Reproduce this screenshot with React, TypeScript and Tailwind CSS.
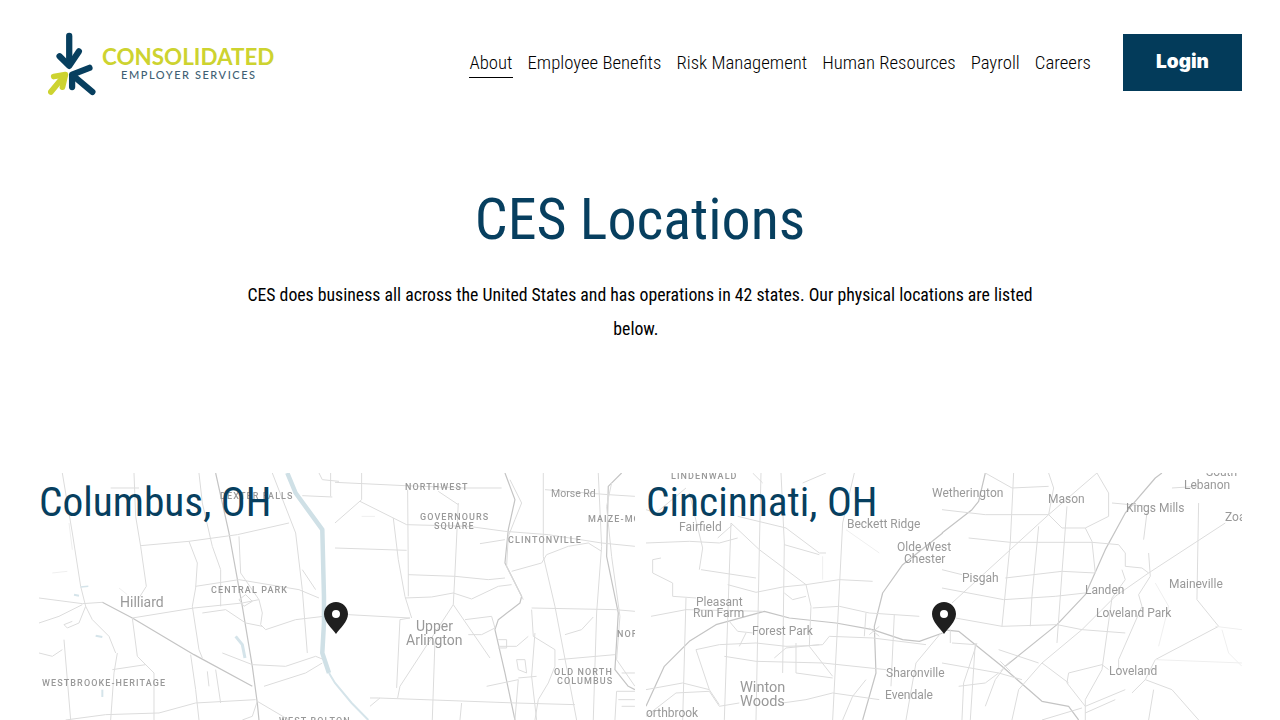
type Label = { x: number; y: number; text: string; size: number; spaced?: boolean };
type Line = { points: string; tone?: "major" | "faint" };

const navLinks = ["About", "Employee Benefits", "Risk Management", "Human Resources", "Payroll", "Careers"];

// road points are in 3x crop coords, each map is traced in a left and a right half
const columbusLeft = [
  "190,388 280,435 465,545 640,640|major",
  "530,0 570,180 610,400 640,580 655,690 660,741|major",
  "0,375 130,392 190,388",
  "70,0 100,180 125,340 140,400 120,450 85,465 75,455 100,445",
  "285,0 290,130 305,220 322,340 300,375",
  "305,218 450,205 595,185 750,150",
  "480,0 490,90 520,220 545,290 545,400",
  "450,205 475,270 470,345 460,400 480,530 490,555",
  "600,190 605,300 660,380 670,420 665,455 680,470 770,440 855,430",
  "470,340 600,320 780,350 840,375",
  "280,435 465,405 610,390 660,380",
  "280,435 295,550 345,600 345,741",
  "220,590 320,575",
  "235,540 225,600 215,741",
  "75,500 95,741",
  "0,450 60,430 130,395",
  "0,540 40,550 70,530",
  "140,400 160,440 210,490 230,540",
  "455,545 470,650 480,741",
  "505,595 510,640",
  "530,590 545,690",
  "80,741 200,725 360,720 470,690 650,680",
  "655,685 750,741",
  "655,685 640,730 610,741",
  "640,575 740,580 830,550 855,560",
  "675,640 800,600 850,570",
  "700,0 770,180 790,350 805,540",
  "790,290 830,350",
  "550,540 640,575",
  "215,45 300,45",
  "490,420 560,410 620,450 670,460",
  "840,0 850,20 900,25",
  "875,0 875,70",
  "790,68 880,72",
  "600,380 620,365 640,385 615,400 600,380",
  "90,150 100,230|faint",
  "40,300 85,295|faint",
  "240,345 265,365|faint",
];

const columbusRight = [
  "510,0 540,80 520,170 510,270 560,370 555,390 490,440 480,470 510,600 540,741|major",
  "525,20 560,90 540,140 520,190 515,280 565,380",
  "860,0 820,40 815,250 850,420 840,590 880,640 900,650|major",
  "830,30 815,100 830,250 855,430 845,560 900,640",
  "0,28 210,38 390,45 500,45",
  "80,0 80,80 0,150",
  "75,85 215,155 400,160 510,175 640,185 800,210 900,220",
  "0,225 215,232",
  "175,135 190,260 210,370 230,435",
  "218,50 220,300 220,370",
  "370,90 360,300 355,395",
  "310,55 370,95",
  "220,305 360,310 460,320 510,315",
  "210,375 290,372 355,360 410,378 490,340 530,335",
  "40,425 225,435 195,440 185,645",
  "355,395 195,640 188,675",
  "355,395 465,555",
  "300,505 292,741",
  "390,440 470,430 480,465 440,485 400,485",
  "105,675 130,675 540,690 720,695",
  "105,700 135,675",
  "380,690 375,741",
  "490,500 515,500 515,525 490,525",
  "490,520 545,520 580,490",
  "545,560 570,560 575,600 550,590 545,560",
  "550,615 605,610",
  "455,640 550,620 540,741",
  "590,405 840,410 900,415",
  "590,410 595,490 660,530 660,580 640,630 610,680 600,741",
  "625,0 625,250 660,400 725,741",
  "690,485 740,470 775,432",
  "670,560 840,545",
  "530,295 620,270 635,245 700,220 760,210 800,235",
  "435,212 510,200",
  "630,50 820,65 900,70",
  "790,0 800,220 785,420 775,741",
  "860,600 900,600",
  "845,655 900,655",
  "845,655 840,741",
  "850,680 900,680",
  "860,700 900,700",
  "600,480 590,610 605,741",
  "80,130 120,130|faint",
];

const cincinnatiLeft = [
  "0,700 55,580 130,505 210,455 355,415 430,435 570,450 680,470 770,500 820,505 890,480|major",
  "890,180 770,275 710,360 685,460 690,600 650,741|major",
  "255,150 340,230 480,335 495,400 490,520 560,610",
  "275,130 420,165 520,240 540,240",
  "0,210 130,205 220,210 275,195",
  "215,195 260,155",
  "165,290 330,315",
  "20,260 20,300 80,330 80,370 150,375",
  "160,290 170,225 130,60",
  "245,335 330,358 410,342 480,335 580,320 680,325",
  "255,150 245,440 235,741",
  "340,230 330,741",
  "345,0 340,230",
  "405,0 415,210 410,600",
  "415,215 520,245",
  "415,360 440,380 480,370",
  "625,0 590,150 575,450 560,741",
  "500,405 580,400 670,420 820,430",
  "660,420 655,490",
  "745,425 735,640",
  "150,530 220,515 330,510 420,520 490,518 530,515 550,490 680,495 840,515",
  "385,555 420,525 520,515",
  "235,550 330,565 530,570 720,590",
  "150,530 190,650 220,695",
  "120,375 110,741",
  "15,430 120,410 350,415",
  "280,520 300,480",
  "250,445 275,475 320,480",
  "0,650 110,630 190,650",
  "450,510 450,600 560,615",
  "0,730 90,660 190,655 220,700 280,690",
  "410,690 480,680 560,660 700,680",
  "660,620 620,670 590,741",
  "885,480 810,570 780,741",
  "320,0 350,30",
  "120,45 30,120 0,110",
  "20,260 45,255",
  "670,465 700,490",
  "670,485 700,460",
  "540,0 470,30",
  "530,250 530,320|faint",
  "600,170 700,240|faint",
];

const cincinnatiRight = [
  "0,470 50,475 180,580 300,685 380,700 410,741|major",
  "190,580 345,455 430,365 490,230 550,120 640,15 660,0|major",
  "130,0 110,85 90,110 0,180|major",
  "465,0 320,125 30,390",
  "320,0 335,45 320,125 360,165 430,165 500,130 500,60 465,0",
  "430,165 450,205 460,300",
  "80,195 205,208 450,208 530,215 550,240 550,280 600,285 620,300",
  "215,0 205,208 180,460",
  "290,160 270,370 265,460",
  "375,100 360,300 345,510",
  "0,290 60,305",
  "190,315 360,295 460,300",
  "0,345 185,380 340,370 430,360",
  "40,435 180,460 345,455 420,470 550,480",
  "850,150 620,300 520,370 420,470 300,570 230,650 210,741",
  "620,240 625,310 590,365 600,400 530,560 530,590",
  "540,290 550,320 510,375 480,590 430,680 430,741",
  "615,120 605,200",
  "770,90 765,380 830,460 640,560 610,620 570,660",
  "380,600 480,575 500,590",
  "380,600 375,630 430,700",
  "610,620 690,650 770,741",
  "635,650 620,741",
  "300,570 380,630",
  "100,510 85,741",
  "105,510 65,630 60,741",
  "0,570 170,600 240,620",
  "170,530 290,570",
  "130,700 160,620 190,580",
  "50,640 130,630 170,600",
  "30,510 100,515",
  "25,470 25,510",
  "430,700 550,650",
  "430,720 520,680",
  "300,741 420,705",
  "130,0 210,45 320,40",
  "0,110 130,125 320,125",
  "690,45 770,40",
  "510,90 620,100",
  "175,565 205,595",
  "175,595 205,565",
  "640,560 900,570|faint",
  "820,460 900,470|faint",
  "840,470 860,540 900,580|faint",
  "640,330 680,400 650,520|faint",
];

const toLines = (rows: string[]): Line[] =>
  rows.map((row) => {
    const [points, tone] = row.split("|");
    return { points, tone: tone as Line["tone"] };
  });

const lineColor = { major: "#c4c4c4", faint: "#efefef", base: "#dcdcdc" };

const columbusLabels: Label[] = [
  { x: 366, y: 17, text: "NORTHWEST", size: 9, spaced: true },
  { x: 381, y: 47, text: "GOVERNOURS", size: 9, spaced: true },
  { x: 395, y: 56, text: "SQUARE", size: 9, spaced: true },
  { x: 512, y: 24, text: "Morse Rd", size: 10.5 },
  { x: 549, y: 49, text: "MAIZE-MO", size: 9, spaced: true },
  { x: 469, y: 70, text: "CLINTONVILLE", size: 9, spaced: true },
  { x: 181, y: 26, text: "DEXTER FALLS", size: 9, spaced: true },
  { x: 172, y: 120, text: "CENTRAL PARK", size: 9, spaced: true },
  { x: 81, y: 134, text: "Hilliard", size: 14 },
  { x: 377, y: 158, text: "Upper", size: 14 },
  { x: 367, y: 172, text: "Arlington", size: 14 },
  { x: 3, y: 213, text: "WESTBROOKE-HERITAGE", size: 9, spaced: true },
  { x: 578, y: 164, text: "NOR", size: 9, spaced: true },
  { x: 515, y: 202, text: "OLD NORTH", size: 9, spaced: true },
  { x: 518, y: 211, text: "COLUMBUS", size: 9, spaced: true },
  { x: 240, y: 251, text: "WEST BOLTON", size: 9, spaced: true },
];

const cincinnatiLabels: Label[] = [
  { x: 25, y: 6, text: "LINDENWALD", size: 9, spaced: true },
  { x: 33, y: 58, text: "Fairfield", size: 12 },
  { x: 201, y: 55, text: "Beckett Ridge", size: 12 },
  { x: 286, y: 24, text: "Wetherington", size: 12 },
  { x: 402, y: 30, text: "Mason", size: 12 },
  { x: 480, y: 39, text: "Kings Mills", size: 12 },
  { x: 560, y: 3, text: "South", size: 12 },
  { x: 538, y: 16, text: "Lebanon", size: 12 },
  { x: 579, y: 48, text: "Zoar", size: 12 },
  { x: 251, y: 78, text: "Olde West", size: 12 },
  { x: 258, y: 90, text: "Chester", size: 12 },
  { x: 316, y: 109, text: "Pisgah", size: 12 },
  { x: 439, y: 121, text: "Landen", size: 12 },
  { x: 523, y: 115, text: "Maineville", size: 12 },
  { x: 450, y: 144, text: "Loveland Park", size: 12 },
  { x: 50, y: 133, text: "Pleasant", size: 12 },
  { x: 47, y: 144, text: "Run Farm", size: 12 },
  { x: 106, y: 162, text: "Forest Park", size: 12 },
  { x: 240, y: 204, text: "Sharonville", size: 12 },
  { x: 239, y: 226, text: "Evendale", size: 12 },
  { x: 463, y: 202, text: "Loveland", size: 12 },
  { x: 94, y: 219, text: "Winton", size: 14.5 },
  { x: 94, y: 233, text: "Woods", size: 14.5 },
  { x: 0, y: 244, text: "orthbrook", size: 12 },
];

function Logo() {
  return (
    <div className="flex h-[69px] w-[226px] items-center">
      <svg viewBox="0 0 56 69" className="h-[69px] w-[54px] shrink-0" fill="none" strokeLinecap="round" strokeLinejoin="round">
        <g stroke="#073f5f" strokeWidth="6.5">
          <path d="M22 7 L22 35" />
          <path d="M12 28 L22 38 L32 23" />
          <path d="M43 40 L25 47 L25 60" />
          <path d="M26 48 L46 65" />
        </g>
        <g stroke="#cdd330" strokeWidth="6">
          <path d="M6 49 L18 47 L15 60" />
          <path d="M17 48 L3 65" />
        </g>
      </svg>
      <div className="flex flex-col items-start font-['Lato',sans-serif] [font-stretch:100%]">
        <span className="text-[22.4px] leading-[23px] font-bold text-[#cdd330]">CONSOLIDATED</span>
        <span className="ml-[19px] text-[11px] leading-[13px] font-medium tracking-[1.55px] text-[#3f5f74]">EMPLOYER SERVICES</span>
      </div>
    </div>
  );
}

function LocationMap({
  title,
  left,
  right,
  labels,
  river,
  pinClass,
}: {
  title: string;
  left: string[];
  right: string[];
  labels: Label[];
  river?: boolean;
  pinClass: string;
}) {
  const drawLines = (rows: string[]) =>
    toLines(rows).map((line) => (
      <polyline
        key={line.points}
        points={line.points}
        stroke={lineColor[line.tone ?? "base"]}
        strokeWidth={line.tone === "major" ? 1.2 : 1}
        strokeLinejoin="round"
        vectorEffect="non-scaling-stroke"
      />
    ));

  return (
    <div className="relative h-[247px] overflow-hidden bg-white">
      <svg viewBox="0 0 596 247" className="h-[247px] w-full [font-stretch:100%] blur-[0.4px]" fill="none">
        <g transform="scale(0.3333)">
          {drawLines(left)}
          {river && (
            <>
              <polyline points="745,0 770,60 850,170 855,370 855,450 850,540 870,600" stroke="#cfe0e6" strokeWidth="4.5" strokeLinejoin="round" vectorEffect="non-scaling-stroke" />
              <polyline points="590,490 610,515 618,555" stroke="#d5e4ea" strokeWidth="3" vectorEffect="non-scaling-stroke" />
              <polyline points="190,650 190,672" stroke="#d5e4ea" strokeWidth="2" vectorEffect="non-scaling-stroke" />
              <polyline points="170,488 190,492" stroke="#d5e4ea" strokeWidth="2" vectorEffect="non-scaling-stroke" />
              <polyline points="105,365 120,368" stroke="#d5e4ea" strokeWidth="2" vectorEffect="non-scaling-stroke" />
              <polyline points="125,342 148,340" stroke="#d5e4ea" strokeWidth="1.5" vectorEffect="non-scaling-stroke" />
            </>
          )}
        </g>
        <g transform="scale(0.3333) translate(888 0)">
          {drawLines(right)}
          {river && <polyline points="-18,600 0,630 50,690 100,741" stroke="#d5e4ea" strokeWidth="2" vectorEffect="non-scaling-stroke" />}
        </g>
        {labels.map((label) => (
          <text
            key={label.text}
            x={label.x}
            y={label.y}
            fontFamily="Roboto, sans-serif"
            fontSize={label.size}
            letterSpacing={label.spaced ? 1.1 : 0}
            fontWeight={label.spaced ? 500 : 400}
            fill="#999999"
          >
            {label.text}
          </text>
        ))}
      </svg>
      <svg viewBox="0 0 24 32" className={`absolute top-[129px] h-[32px] w-[24px] ${pinClass}`}>
        <path fillRule="evenodd" fill="#1f1f1f" d="M12 0C5.4 0 0 5.3 0 12c0 7.6 8 14.5 12 20 4-5.5 12-12.4 12-20C24 5.3 18.6 0 12 0Zm0 8a4 4 0 1 1 0 8 4 4 0 0 1 0-8Z" />
      </svg>
      <h2 className="absolute top-[1px] left-0 text-[41.4px] leading-[56px] font-normal text-[#073f5f]">{title}</h2>
    </div>
  );
}

export default function App() {
  return (
    <div className="h-screen overflow-hidden bg-white font-['Roboto',sans-serif] [font-stretch:75%] text-black">
      <header className="flex items-center justify-between pt-[28px] pr-[38px] pl-[48px]">
        <Logo />
        <div className="flex items-center gap-8">
          <nav className="flex gap-[15px] text-[18.75px] leading-[28px] font-light">
            {navLinks.map((link) => (
              <a key={link} className={link === "About" ? "border-b border-black pt-[2px]" : "border-b border-transparent pt-[2px]"}>
                {link}
              </a>
            ))}
          </nav>
          <button className="h-[57px] w-[119px] bg-[#033b5a] font-['Inter',sans-serif] [font-stretch:100%] text-[19px] font-black text-white">Login</button>
        </div>
      </header>

      <section className="mt-[84px] flex flex-col items-center">
        <h1 className="text-[58px] leading-[76px] font-normal text-[#073f5f]">CES Locations</h1>
        <p className="mt-[21px] w-[800px] text-center text-[17.75px] leading-[34px] font-normal">
          CES does business all across the United States and has operations in 42 states. Our physical locations are listed below.{"\u00a0\u00a0"}
        </p>
      </section>

      <section className="mt-[127px] grid grid-cols-2 gap-[11px] pr-[38px] pl-[39px]">
        <LocationMap title="Columbus, OH" left={columbusLeft} right={columbusRight} labels={columbusLabels} river pinClass="left-[285px]" />
        <LocationMap title="Cincinnati, OH" left={cincinnatiLeft} right={cincinnatiRight} labels={cincinnatiLabels} pinClass="left-[286px]" />
      </section>
    </div>
  );
}
